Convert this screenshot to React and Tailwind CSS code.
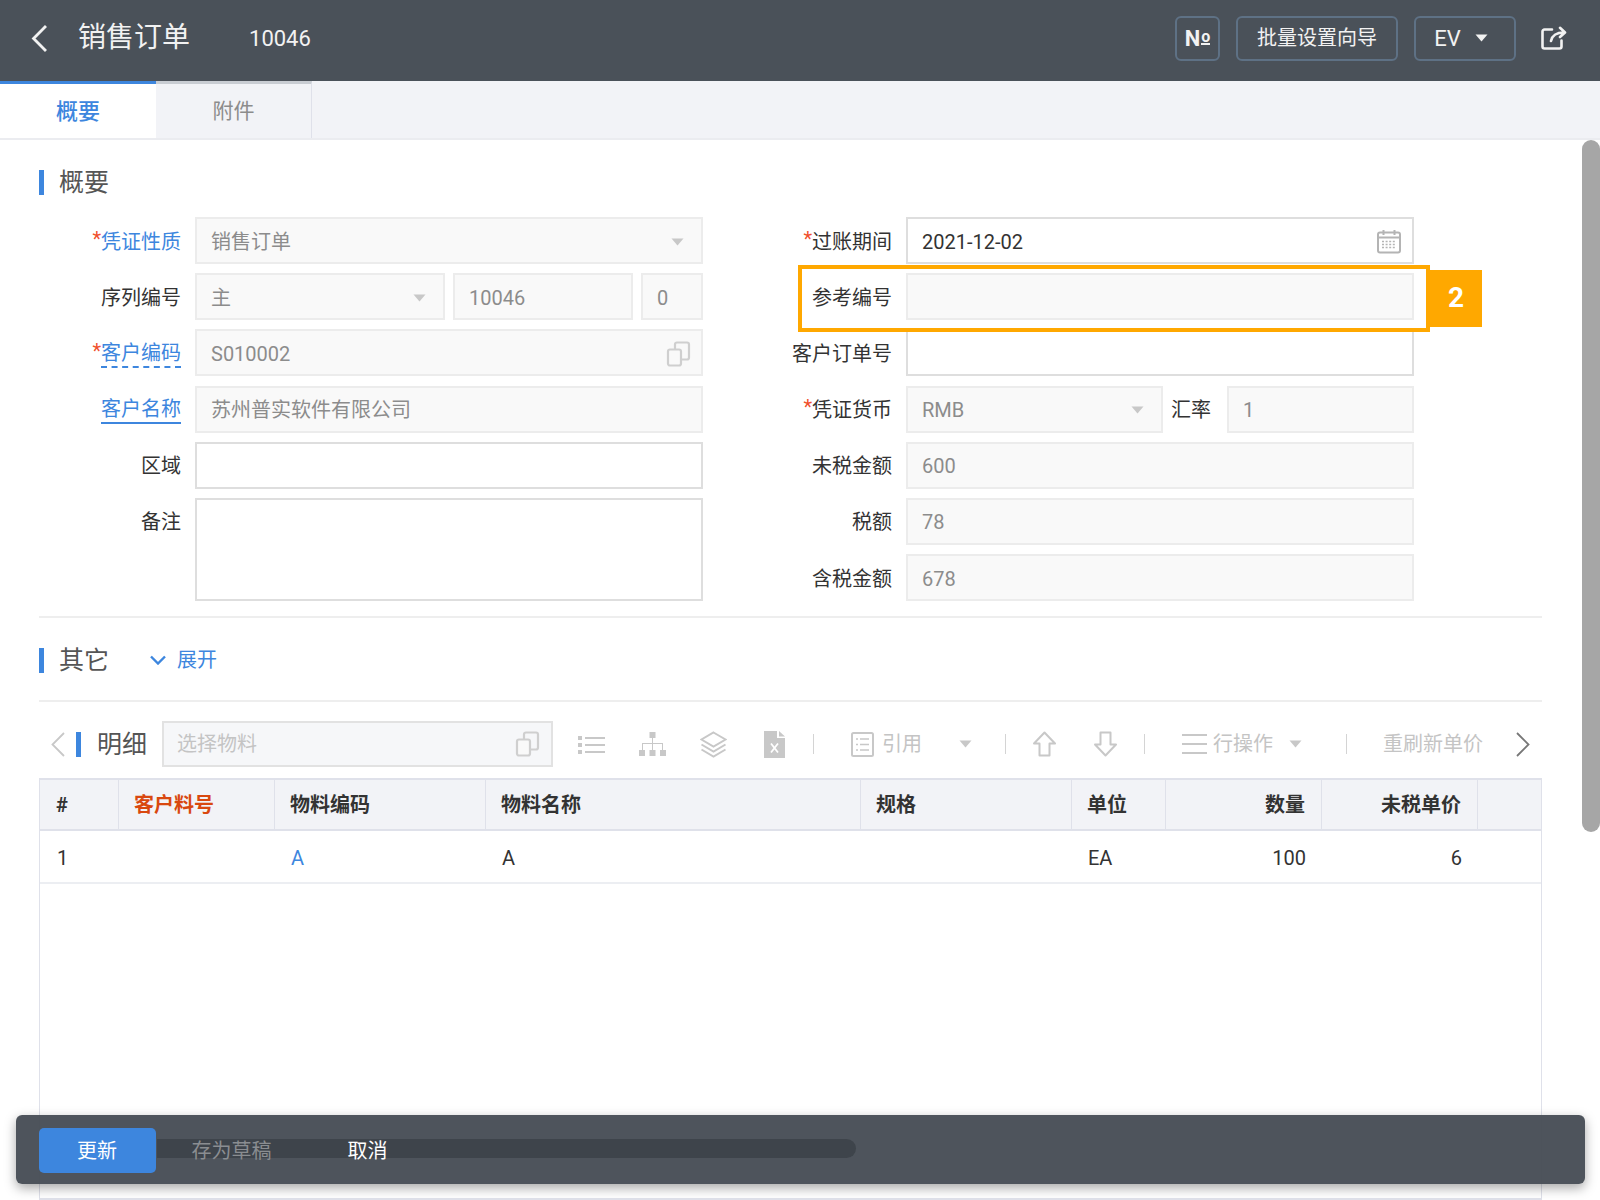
import React from 'react';

const Caret = ({ className = 'text-[#c8c8c8]' }) => (
  <svg width="13" height="8" viewBox="0 0 13 8" className={className}>
    <path d="M0.5 0.5h12L6.5 7.5z" fill="currentColor" />
  </svg>
);

const CopyIcon = ({ className = '' }) => (
  <svg width="25" height="26" viewBox="0 0 25 26" fill="none" stroke="#cfcfcf" strokeWidth="2.2" className={className}>
    <rect x="9" y="1.5" width="14" height="17" rx="2" />
    <rect x="2" y="8.5" width="13" height="16" rx="2" fill="#f9f9f9" />
  </svg>
);

const CalendarIcon = ({ className = '' }) => (
  <svg width="24" height="25" viewBox="0 0 24 25" fill="none" stroke="#b4b4b4" className={className}>
    <rect x="1" y="3.5" width="22" height="20" rx="2" strokeWidth="2" />
    <path d="M1 8.5h22M6.5 1v5M17.5 1v5" strokeWidth="2" />
    <path d="M5 12.5h14M5 15.5h14M5 18.5h14" strokeWidth="1.6" strokeDasharray="2 1.6" />
  </svg>
);

const ListIcon = () => (
  <svg width="27" height="19" viewBox="0 0 27 19" fill="#c8c8c8">
    <rect x="0" y="1" width="4" height="4" />
    <rect x="0" y="8" width="4" height="4" />
    <rect x="0" y="15" width="4" height="4" />
    <rect x="7" y="2" width="20" height="2" />
    <rect x="7" y="9" width="20" height="2" />
    <rect x="7" y="16" width="20" height="2" />
  </svg>
);

const TreeIcon = () => (
  <svg width="27" height="25" viewBox="0 0 27 25" fill="#c8c8c8">
    <rect x="10.5" y="0" width="6" height="6" />
    <path d="M13 6h1v5h10v7h-1v-6H14v6h-1v-6H4v6H3v-7h10z" />
    <rect x="0" y="18" width="6" height="6" />
    <rect x="10.5" y="18" width="6" height="6" />
    <rect x="21" y="18" width="6" height="6" />
  </svg>
);

const LayersIcon = () => (
  <svg width="27" height="27" viewBox="0 0 27 27" fill="none" stroke="#c8c8c8" strokeWidth="2">
    <path d="M13.5 1.5L25.5 8.5L13.5 15.5L1.5 8.5z" />
    <path d="M1.5 13.5L13.5 20.5L25.5 13.5" />
    <path d="M1.5 18.5L13.5 25.5L25.5 18.5" />
  </svg>
);

const ExcelIcon = () => (
  <svg width="21" height="27" viewBox="0 0 21 27">
    <path d="M0 0h13v7h8v20H0z" fill="#c8c8c8" />
    <path d="M15 0l6 5.5h-6z" fill="#c8c8c8" />
    <path d="M7 12.5l7 9M14 12.5l-7 9" stroke="#fff" strokeWidth="1.8" />
  </svg>
);

const QuoteIcon = () => (
  <svg width="23" height="25" viewBox="0 0 23 25" fill="none" stroke="#c8c8c8" strokeWidth="2">
    <rect x="1" y="1" width="21" height="23" rx="1.5" />
    <path d="M5 7h2M9 7h9M5 12.5h2M9 12.5h9M5 18h2M9 18h9" strokeWidth="1.6" />
  </svg>
);

const UpIcon = () => (
  <svg width="23" height="26" viewBox="0 0 23 26" fill="none" stroke="#c8c8c8" strokeWidth="2" strokeLinejoin="round">
    <path d="M11.5 1.5L22 12.5h-5.500v12h-10v-12H1z" />
  </svg>
);

const DownIcon = () => (
  <svg width="23" height="26" viewBox="0 0 23 26" fill="none" stroke="#c8c8c8" strokeWidth="2" strokeLinejoin="round">
    <path d="M11.5 24.500L22 13.500h-5.500v-12h-10v12H1z" />
  </svg>
);

const LinesIcon = () => (
  <svg width="25" height="20" viewBox="0 0 25 20" fill="#c8c8c8">
    <rect x="0" y="0" width="25" height="2" />
    <rect x="0" y="9" width="25" height="2" />
    <rect x="0" y="18" width="25" height="2" />
  </svg>
);

const Chevron = ({ dir = 'left', color = '#c8c8c8', w = 14, h = 25, sw = 1.8 }) => (
  <svg width={w} height={h} viewBox="0 0 14 25" fill="none" stroke={color} strokeWidth={sw}>
    <path d={dir === 'left' ? 'M13 1L1.500 12.500L13 24' : 'M1 1L12.500 12.500L1 24'} />
  </svg>
);

const ShareIcon = () => (
  <svg width="26" height="24" viewBox="0 0 26 24" fill="none" stroke="#f2f2f2" strokeWidth="2.600" strokeLinecap="round" strokeLinejoin="round">
    <path d="M11 3.500H3.500a2 2 0 0 0-2 2v15a2 2 0 0 0 2 2h15a2 2 0 0 0 2-2v-6" />
    <path d="M10 15c1-5 5-8.500 13-8.500M19 1.800L24 6.500L19 11" />
  </svg>
);

const Sep = ({ className }) => <div className={`h-[20px] w-px bg-[#d4d4d4] ${className}`} />;

const Label = ({ children, required, tone, underline, w }) => (
  <div className={`flex h-[47px] shrink-0 items-center justify-end pt-[2px] ${w}`}>
    {required && <span className="relative -top-[3px] text-[#f0502d]">*</span>}
    <span
      className={`${tone === 'blue' ? 'text-[#3d86de]' : 'text-[#333]'} ${
        underline === 'dashed' ? 'border-b-2 border-dashed border-[#3d86de] leading-[26px]' : ''
      } ${underline === 'solid' ? 'border-b-2 border-[#3d86de] leading-[26px]' : ''}`}
    >
      {children}
    </span>
  </div>
);

const Field = ({ children, white, dark, className = 'flex-1', tall }) => (
  <div
    className={`flex items-center justify-between border-2 pl-[14px] pr-[17px] pt-[2px] ${tall ? 'h-[103px]' : 'h-[47px]'} ${
      white ? 'border-[#dedede] bg-white' : 'border-[#ececec] bg-[#f9f9f9]'
    } ${dark ? 'text-[#333]' : 'text-[#8c8c8c]'} ${className}`}
  >
    {children}
  </div>
);

const SectionTitle = ({ children }) => (
  <div className="flex h-[25px] items-center">
    <div className="h-[25px] w-[5px] bg-[#3d86de]" />
    <div className="ml-[15px] text-[25px] leading-[25px] text-[#555]">{children}</div>
  </div>
);

const LEFT = 'w-[142px]';
const RIGHT = 'w-[144px]';

const FormLeft = () => (
  <div className="flex w-[664px] flex-col gap-y-[9.2px]">
    <div className="flex gap-x-[14px]">
      <Label required tone="blue" w={LEFT}>凭证性质</Label>
      <Field>销售订单<Caret /></Field>
    </div>
    <div className="flex gap-x-[14px]">
      <Label w={LEFT}>序列编号</Label>
      <div className="flex flex-1 gap-x-[8px]">
        <Field className="w-[250px]">主<Caret /></Field>
        <Field className="w-[180px]">10046</Field>
        <Field className="w-[62px]">0</Field>
      </div>
    </div>
    <div className="flex gap-x-[14px]">
      <Label required tone="blue" underline="dashed" w={LEFT}>客户编码</Label>
      <Field>S010002<CopyIcon className="-mr-[7px]" /></Field>
    </div>
    <div className="flex gap-x-[14px]">
      <Label tone="blue" underline="solid" w={LEFT}>客户名称</Label>
      <Field>苏州普实软件有限公司</Field>
    </div>
    <div className="flex gap-x-[14px]">
      <Label w={LEFT}>区域</Label>
      <Field white />
    </div>
    <div className="flex gap-x-[14px]">
      <Label w={LEFT}>备注</Label>
      <Field white tall />
    </div>
  </div>
);

const FormRight = () => (
  <div className="ml-[45px] flex w-[666px] flex-col gap-y-[9.2px]">
    <div className="flex gap-x-[14px]">
      <Label required w={RIGHT}>过账期间</Label>
      <Field white dark>2021-12-02<CalendarIcon className="-mr-[6px]" /></Field>
    </div>
    <div className="relative flex gap-x-[14px]">
      <Label w={RIGHT}>参考编号</Label>
      <Field />
      {/* callout on top of the row */}
      <div className="absolute -top-[8.500px] left-[50px] h-[67px] w-[632px] border-4 border-[#ffa800]" />
      <div className="absolute -top-[3.500px] left-[682px] flex h-[57px] w-[52px] items-center justify-center bg-[#ffa800] text-[28px] font-bold text-white">
        2
      </div>
    </div>
    <div className="flex gap-x-[14px]">
      <Label w={RIGHT}>客户订单号</Label>
      <Field white />
    </div>
    <div className="flex gap-x-[14px]">
      <Label required w={RIGHT}>凭证货币</Label>
      <div className="flex flex-1 items-center">
        <Field className="w-[257px]">RMB<Caret /></Field>
        <div className="w-[64px] pl-[8px] pt-[2px] text-[#333]">汇率</div>
        <Field className="flex-1">1</Field>
      </div>
    </div>
    <div className="flex gap-x-[14px]">
      <Label w={RIGHT}>未税金额</Label>
      <Field>600</Field>
    </div>
    <div className="flex gap-x-[14px]">
      <Label w={RIGHT}>税额</Label>
      <Field>78</Field>
    </div>
    <div className="flex gap-x-[14px]">
      <Label w={RIGHT}>含税金额</Label>
      <Field>678</Field>
    </div>
  </div>
);

const Toolbar = () => (
  <div className="mt-[19px] flex h-[46px] items-center text-[#c4c4c4]">
    <div className="ml-[12px]"><Chevron /></div>
    <div className="ml-[11px] h-[25px] w-[5px] bg-[#3d86de]" />
    <div className="ml-[16px] w-[50px] text-[25px] leading-[25px] text-[#555]">明细</div>
    <div className="ml-[15px] flex h-[46px] w-[391px] items-center justify-between border-2 border-[#e2e2e2] bg-[#f6f7f9] pl-[13px] pr-[11px]">
      选择物料<CopyIcon />
    </div>
    <div className="ml-[25px]"><ListIcon /></div>
    <div className="ml-[34px]"><TreeIcon /></div>
    <div className="ml-[34px]"><LayersIcon /></div>
    <div className="ml-[37px]"><ExcelIcon /></div>
    <Sep className="ml-[28px]" />
    <div className="ml-[37px]"><QuoteIcon /></div>
    <div className="ml-[8px] w-[41px]">引用</div>
    <div className="ml-[36px]"><Caret /></div>
    <Sep className="ml-[33px]" />
    <div className="ml-[27px]"><UpIcon /></div>
    <div className="ml-[38px]"><DownIcon /></div>
    <Sep className="ml-[27px]" />
    <div className="ml-[37px]"><LinesIcon /></div>
    <div className="ml-[6px] w-[62px] whitespace-nowrap">行操作</div>
    <div className="ml-[14px]"><Caret /></div>
    <Sep className="ml-[44px]" />
    <div className="ml-[36px] w-[101px] whitespace-nowrap">重刷新单价</div>
    <div className="ml-[32px]"><Chevron dir="right" color="#777" /></div>
  </div>
);

const COLS = 'grid grid-cols-[78px_156px_211px_375px_211px_94px_156px_156px_1fr]';

const DetailTable = () => (
  <div className="mt-[11px] flex-1 border-x border-b-2 border-[#dfe1ea]">
    <div className={`${COLS} h-[53px] border-y-2 border-[#dfe1ea] bg-[#f2f3f7] font-bold text-[#333]`}>
      <div className="flex items-center pl-[16px]">#</div>
      <div className="flex items-center border-l border-[#dfe1ea] pl-[15px] text-[#d9480f]">客户料号</div>
      <div className="flex items-center border-l border-[#dfe1ea] pl-[15px]">物料编码</div>
      <div className="flex items-center border-l border-[#dfe1ea] pl-[15px]">物料名称</div>
      <div className="flex items-center border-l border-[#dfe1ea] pl-[15px]">规格</div>
      <div className="flex items-center border-l border-[#dfe1ea] pl-[15px]">单位</div>
      <div className="flex items-center justify-end border-l border-[#dfe1ea] pr-[16px]">数量</div>
      <div className="flex items-center justify-end border-l border-[#dfe1ea] pr-[16px]">未税单价</div>
      <div className="border-l border-[#dfe1ea]" />
    </div>
    <div className={`${COLS} h-[53px] border-b-2 border-[#eceef2] pt-[2px] text-[#333]`}>
      <div className="flex items-center pl-[17px]">1</div>
      <div />
      <div className="flex items-center pl-[17px] text-[#3d86de]">A</div>
      <div className="flex items-center pl-[17px]">A</div>
      <div />
      <div className="flex items-center pl-[17px]">EA</div>
      <div className="flex items-center justify-end pr-[15px]">100</div>
      <div className="flex items-center justify-end pr-[15px]">6</div>
      <div />
    </div>
  </div>
);

export default function App() {
  return (
    <div className="relative flex h-[1200px] w-[1600px] flex-col overflow-hidden bg-white font-['Roboto','Noto_Sans_CJK_SC',sans-serif] text-[20px]">
      <header className="flex h-[81px] shrink-0 items-center bg-[#4a5159] pb-[5px] text-[#f2f2f2]">
        <div className="ml-[31px]"><Chevron color="#f2f2f2" w={17} h={27} sw={2.6} /></div>
        <div className="ml-[30px] text-[28px]">销售订单</div>
        <div className="ml-[59px] text-[22px]">10046</div>
        <div className="ml-auto flex h-[45px] w-[45px] items-start justify-center rounded-[6px] border-2 border-[#5e7185] pt-[8px] font-bold">
          <span className="text-[22px] leading-[25px]">N</span>
          <span className="ml-px mt-[4px] border-b-2 border-[#f2f2f2] text-[16px] leading-[13px]">o</span>
        </div>
        <div className="ml-[16px] flex h-[45px] w-[162px] items-center justify-center rounded-[6px] border-2 border-[#5e7185]">批量设置向导</div>
        <div className="ml-[16px] flex h-[45px] w-[102px] items-center justify-center gap-x-[14px] rounded-[6px] border-2 border-[#5e7185] pr-[8px]">
          <span className="text-[22px]">EV</span>
          <Caret className="text-[#f2f2f2]" />
        </div>
        <div className="ml-[25px] mr-[33px]"><ShareIcon /></div>
      </header>

      <nav className="flex h-[59px] shrink-0 border-b-2 border-[#ebecf0] bg-[#f2f3f7]">
        <div className="flex w-[156px] items-center justify-center border-t-[3px] border-[#3d86de] bg-white text-[22px] font-medium text-[#3d86de]">概要</div>
        <div className="flex w-[156px] items-center justify-center border-r border-t-[3px] border-r-[#dfe1ea] border-t-[#c9cdd3] pt-[2px] text-[21px] text-[#8c8c8c]">附件</div>
      </nav>

      <main className="flex flex-1 flex-col px-[39px] pr-[58px]">
        <div className="mt-[30px]"><SectionTitle>概要</SectionTitle></div>
        <div className="mt-[22px] flex">
          <FormLeft />
          <FormRight />
        </div>
        <div className="mt-[15px] h-[2px] bg-[#eeeeee]" />
        <div className="mt-[27px] flex items-center">
          <SectionTitle>其它</SectionTitle>
          <svg width="16" height="10" viewBox="0 0 16 10" fill="none" stroke="#3d86de" strokeWidth="2.400" className="ml-[41px]">
            <path d="M1 1.500L8 8.500L15 1.500" />
          </svg>
          <div className="ml-[11px] text-[#3d86de]">展开</div>
        </div>
        <div className="mt-[25px] h-[2px] bg-[#eeeeee]" />
        <Toolbar />
        <DetailTable />
      </main>

      {/* page scrollbar */}
      <div className="absolute right-0 top-[140px] h-[692px] w-[18px] rounded-full bg-[#a6a6a6]" />

      {/* floating action bar */}
      <div className="absolute left-[15.500px] top-[1115px] flex h-[69px] w-[1569.500px] items-center rounded-[6px] bg-[#444b53]/95 text-white shadow-[0_4px_12px_rgba(0,0,0,0.35)]">
        <div className="absolute left-[141px] top-[24px] h-[19px] w-[699px] rounded-r-full bg-[#3e444b]" />
        <div className="relative ml-[23px] mt-[2px] flex h-[45px] w-[117px] items-center justify-center rounded-[5px] bg-[#3d86de]">更新</div>
        <div className="relative ml-[36px] mt-[2px] text-[#8a8d91]">存为草稿</div>
        <div className="relative ml-[76px] mt-[2px]">取消</div>
      </div>
    </div>
  );
}
